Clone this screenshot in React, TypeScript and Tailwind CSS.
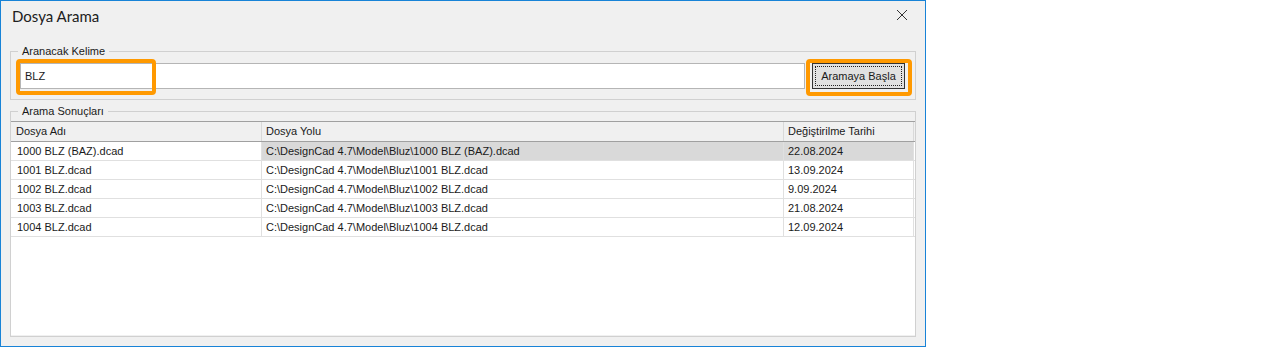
import React from 'react';

const rows = [
  { name: '1000 BLZ (BAZ).dcad', path: 'C:\\DesignCad 4.7\\Model\\Bluz\\1000 BLZ (BAZ).dcad', date: '22.08.2024' },
  { name: '1001 BLZ.dcad', path: 'C:\\DesignCad 4.7\\Model\\Bluz\\1001 BLZ.dcad', date: '13.09.2024' },
  { name: '1002 BLZ.dcad', path: 'C:\\DesignCad 4.7\\Model\\Bluz\\1002 BLZ.dcad', date: '9.09.2024' },
  { name: '1003 BLZ.dcad', path: 'C:\\DesignCad 4.7\\Model\\Bluz\\1003 BLZ.dcad', date: '21.08.2024' },
  { name: '1004 BLZ.dcad', path: 'C:\\DesignCad 4.7\\Model\\Bluz\\1004 BLZ.dcad', date: '12.09.2024' },
];

const ui = { fontFamily: '"Liberation Sans", Arial, sans-serif' };

export default function App() {
  return (
    <div className="flex h-[347px] w-[1270px] bg-white">
      <div
        className="relative flex h-[347px] w-[926px] flex-col border border-[#1883d7] bg-[#f0f0f0] text-[11px] text-[#1a1a1a]"
        style={ui}
      >
        {/* title bar */}
        <div className="flex h-[44px] items-start justify-between pl-[11px] pr-[17px] pt-[5px]">
          <span
            className="text-[15px] leading-[20px] text-[#202020]"
            style={{ fontFamily: 'Lato, "Noto Sans", sans-serif' }}
          >
            Dosya Arama
          </span>
          <svg width="12" height="12" viewBox="0 0 12 12" className="mt-[3px]">
            <path d="M1 1 L11 11 M11 1 L1 11" stroke="#333" strokeWidth="1" fill="none" />
          </svg>
        </div>

        <div className="flex flex-1 flex-col px-[9px] pb-[9px]">
          {/* search group */}
          <fieldset className="border border-[#d0d0d0] p-0">
            <legend className="ml-[7px] px-[4px] leading-[13px] text-[#1a1a1a]">Aranacak Kelime</legend>
            <div className="flex gap-[7px] pb-[10px] pl-[9px] pr-[10px] pt-[5px]">
              <div className="flex h-[26px] flex-1 items-center border border-[#b5b5b5] bg-white pl-[4px]">
                BLZ
              </div>
              <button
                className="h-[26px] w-[93px] border border-[#333] bg-[#e1e1e1] p-[2px] text-[11px] text-[#1a1a1a]"
                style={ui}
              >
                <span className="flex h-full w-full items-center justify-center border border-dotted border-[#222]">
                  Aramaya Başla
                </span>
              </button>
            </div>
          </fieldset>

          {/* results group */}
          <fieldset className="mt-[5px] flex min-h-0 flex-1 flex-col border border-[#d0d0d0] p-0">
            <legend className="ml-[7px] px-[4px] leading-[13px] text-[#1a1a1a]">Arama Sonuçları</legend>
            <div className="mt-[3px] flex h-[214px] flex-col bg-white">
              <div className="grid h-[21px] grid-cols-[251px_522px_130px_1px] border-y border-[#a0a0a0] bg-[#f0f0f0]">
                <div className="border-r border-[#d9d9d9] pl-[5px] leading-[19px]">Dosya Adı</div>
                <div className="border-r border-[#d9d9d9] pl-[4px] leading-[19px]">Dosya Yolu</div>
                <div className="border-r border-[#d9d9d9] pl-[4px] leading-[19px]">Değiştirilme Tarihi</div>
                <div />
              </div>
              {rows.map((r, i) => (
                <div
                  key={r.name}
                  className="grid h-[19px] grid-cols-[251px_522px_130px_1px] border-b border-[#e0e0e0]"
                >
                  <div className="border-r border-[#e0e0e0] pl-[6px] leading-[18px]">{r.name}</div>
                  <div className={`border-r border-[#e0e0e0] pl-[4px] leading-[18px] ${i === 0 ? 'bg-[#d9d9d9]' : ''}`}>
                    {r.path}
                  </div>
                  <div className={`border-r border-[#e0e0e0] pl-[4px] leading-[18px] ${i === 0 ? 'bg-[#d9d9d9]' : ''}`}>
                    {r.date}
                  </div>
                  <div />
                </div>
              ))}
            </div>
          </fieldset>
        </div>

        {/* orange highlight annotations */}
        <div className="pointer-events-none absolute left-[15px] top-[58px] h-[36px] w-[140px] rounded-[4px] border-[4px] border-[#ff9900]" />
        <div className="pointer-events-none absolute left-[805px] top-[58px] h-[37px] w-[106px] rounded-[4px] border-[4px] border-[#ff9900]" />
      </div>
    </div>
  );
}
